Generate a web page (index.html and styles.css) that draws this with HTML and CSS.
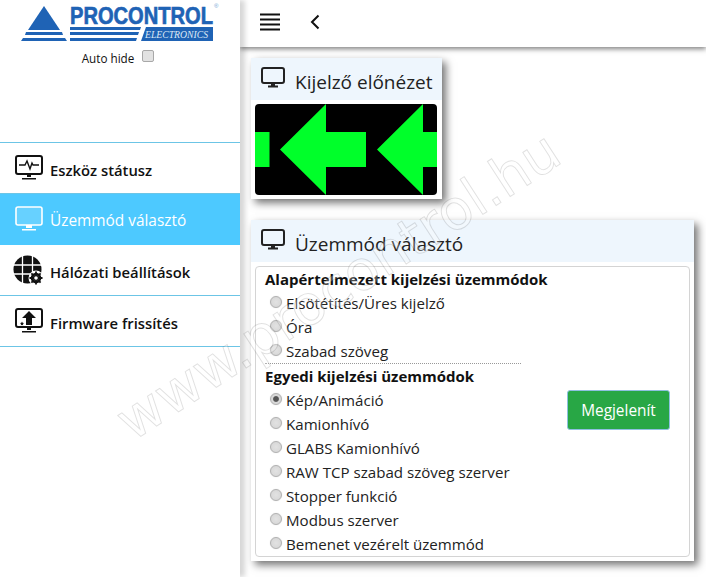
FILE: index.html
```html
<!DOCTYPE html>
<html>
<head>
    <meta charset="utf-8">
    <meta name="viewport" content="width=device-width, initial-scale=1">
    <title>Procontrol</title>
    <link rel="stylesheet" href="styles.css">
</head>
<body>
    <div class="page">
        <aside class="sidebar">
            <div class="logoBox">
                <svg class="logo" width="240" height="44" viewBox="0 0 240 44">
                    <polygon points="44,6 60,30 28,30" fill="#1f63b5"/>
                    <polygon points="26,32 62,32 63,35 25,35" fill="#1f63b5"/>
                    <polygon points="23,38 65,38 67,41 21,41" fill="#1f63b5"/>
                    <text class="logoName" x="70" y="24" textLength="143" lengthAdjust="spacingAndGlyphs">PROCONTROL</text>
                    <polygon points="70,27 141,27 140,30 70,30" fill="#1f63b5"/>
                    <polygon points="70,32 139,32 138,35 70,35" fill="#1f63b5"/>
                    <polygon points="70,38 137,38 136,41 70,41" fill="#1f63b5"/>
                    <polygon points="146,27 213,27 213,41 141,41" fill="#1f63b5"/>
                    <text class="logoSub" x="145" y="37.500" textLength="63" lengthAdjust="spacingAndGlyphs">ELECTRONICS</text>
                    <text class="logoReg" x="214" y="8">®</text>
                </svg>
            </div>
            <label class="autoHide">Auto hide <input type="checkbox" class="autoHideBox"></label>
            <nav class="menu">
                <a class="menuItem">
                    <svg class="menuIcon" width="28" height="26" viewBox="0 0 28 26">
                        <rect x="1" y="1" width="26" height="18" rx="2" fill="none" stroke="#111" stroke-width="2"/>
                        <path d="M4 10h6l2-4 3 8 2-6 1 2h6" fill="none" stroke="#111" stroke-width="1.400"/>
                        <path d="M12 19h4v3h-4zM7 23h14v1.500H7z" fill="#111"/>
                    </svg>
                    <span class="menuText">Eszköz státusz</span>
                </a>
                <a class="menuItem active">
                    <svg class="menuIcon" width="28" height="26" viewBox="0 0 28 26">
                        <rect x="1" y="1" width="26" height="18" rx="2" fill="#fff" fill-opacity="0.15" stroke="#fff" stroke-width="1.600"/>
                        <path d="M11 19h6v3h-6zM7 23h14v1.500H7z" fill="#fff"/>
                    </svg>
                    <span class="menuText">Üzemmód választó</span>
                </a>
                <a class="menuItem">
                    <svg class="menuIcon globeIcon" width="30" height="30" viewBox="0 0 30 30">
                        <circle cx="14.500" cy="14.500" r="14" fill="#111"/>
                        <path d="M0 10h29M0 19h29M9.500 0v29M19.500 0v29" stroke="#fff" stroke-width="1.300" fill="none"/>
                        <circle cx="23" cy="23" r="7.500" fill="#fff"/>
                        <circle cx="23" cy="23" r="4" fill="none" stroke="#111" stroke-width="2.600"/>
                        <path d="M23 16.500v13M16.500 23h13M18.400 18.400l9.200 9.200M27.600 18.400l-9.200 9.200" stroke="#111" stroke-width="1.800"/>
                        <circle cx="23" cy="23" r="1.800" fill="#fff"/>
                    </svg>
                    <span class="menuText">Hálózati beállítások</span>
                </a>
                <a class="menuItem">
                    <svg class="menuIcon" width="28" height="26" viewBox="0 0 28 26">
                        <rect x="1" y="1" width="26" height="18" rx="2" fill="none" stroke="#111" stroke-width="2"/>
                        <path d="M14 3l7 7h-4v7h-6v-7H7z" fill="#111"/>
                        <path d="M7 13.500l.6 1.300 1.400.2-1 1 .2 1.400-1.200-.7-1.200.7.200-1.400-1-1 1.400-.2z" fill="#111"/>
                        <path d="M12 19h4v3h-4zM7 23h14v1.500H7z" fill="#111"/>
                    </svg>
                    <span class="menuText">Firmware frissítés</span>
                </a>
            </nav>
        </aside>

        <main class="content">
            <header class="topBar">
                <svg class="hamburger" width="20" height="18" viewBox="0 0 20 18">
                    <path d="M0 1.500h20M0 6.500h20M0 11.500h20M0 16.500h20" stroke="#111" stroke-width="2"/>
                </svg>
                <svg class="backArrow" width="10" height="16" viewBox="0 0 10 16">
                    <path d="M8.500 1.500L2 8l6.500 6.500" fill="none" stroke="#111" stroke-width="2"/>
                </svg>
            </header>

            <section class="card previewCard">
                <div class="cardHeader">
                    <svg class="screenIcon" width="24" height="21" viewBox="0 0 24 21">
                        <rect x="1" y="1" width="22" height="15" rx="2" fill="none" stroke="#222" stroke-width="2"/>
                        <path d="M10 16h4v2.500h-4zM7 18.500h10V20.500H7z" fill="#222"/>
                    </svg>
                    <span class="cardTitle">Kijelző előnézet</span>
                </div>
                <svg class="preview" width="182" height="91" viewBox="0 0 182 91">
                    <rect width="182" height="91" rx="4" fill="#000"/>
                    <rect y="28" width="14.500" height="35" fill="#00ff2a"/>
                    <polygon points="25,45.500 71,0 71,28 111,28 111,63 71,63 71,91" fill="#00ff2a"/>
                    <polygon points="122,45.500 168,0 168,28 182,28 182,63 168,63 168,91" fill="#00ff2a"/>
                </svg>
            </section>

            <section class="card modeCard">
                <div class="cardHeader">
                    <svg class="screenIcon" width="24" height="21" viewBox="0 0 24 21">
                        <rect x="1" y="1" width="22" height="15" rx="2" fill="none" stroke="#222" stroke-width="2"/>
                        <path d="M10 16h4v2.500h-4zM7 18.500h10V20.500H7z" fill="#222"/>
                    </svg>
                    <span class="cardTitle">Üzemmód választó</span>
                </div>
                <div class="modeBox">
                    <form class="modeList">
                        <h4 class="groupTitle">Alapértelmezett kijelzési üzemmódok</h4>
                        <label class="modeRow"><input type="radio" name="mode" class="modeRadio"> Elsötétítés/Üres kijelző</label>
                        <label class="modeRow"><input type="radio" name="mode" class="modeRadio"> Óra</label>
                        <label class="modeRow"><input type="radio" name="mode" class="modeRadio"> Szabad szöveg</label>
                        <hr class="groupRule">
                        <h4 class="groupTitle">Egyedi kijelzési üzemmódok</h4>
                        <label class="modeRow"><input type="radio" name="mode" class="modeRadio" checked> Kép/Animáció</label>
                        <label class="modeRow"><input type="radio" name="mode" class="modeRadio"> Kamionhívó</label>
                        <label class="modeRow"><input type="radio" name="mode" class="modeRadio"> GLABS Kamionhívó</label>
                        <label class="modeRow"><input type="radio" name="mode" class="modeRadio"> RAW TCP szabad szöveg szerver</label>
                        <label class="modeRow"><input type="radio" name="mode" class="modeRadio"> Stopper funkció</label>
                        <label class="modeRow"><input type="radio" name="mode" class="modeRadio"> Modbus szerver</label>
                        <label class="modeRow"><input type="radio" name="mode" class="modeRadio"> Bemenet vezérelt üzemmód</label>
                    </form>
                    <button class="showButton">Megjelenít</button>
                </div>
            </section>
        </main>

        <div class="watermark">www.procontrol.hu</div>
    </div>
</body>
</html>
```

FILE: styles.css
```css
* {
    box-sizing: border-box;
}

html, body {
    height: 100%;
    margin: 0;
}

body {
    background-color: #fff;
    color: #111;
    font-family: "Open Sans", "Noto Sans", sans-serif;
    font-size: 15px;
    overflow: hidden;
}

.page {
    display: flex;
    height: 577px;
    overflow: hidden;
    position: relative;
}

.sidebar {
    width: 240px;
    flex: none;
    background-color: #fff;
    box-shadow: 5px 0 5px rgba(0, 0, 0, 0.16);
    position: relative;
    z-index: 2;
}

.logoBox {
    height: 44px;
}

.logo {
    display: block;
}

.logoName {
    font-family: "Liberation Sans", sans-serif;
    font-weight: bold;
    font-size: 24px;
    fill: #1f63b5;
    stroke: #1f63b5;
    stroke-width: 0.7px;
}

.logoSub {
    font-family: "Liberation Serif", serif;
    font-style: italic;
    font-size: 9.5px;
    fill: #dce8f6;
}

.logoReg {
    font-family: "Liberation Sans", sans-serif;
    font-size: 6px;
    fill: #6f9fd4;
}

.autoHide {
    display: flex;
    justify-content: center;
    align-items: flex-start;
    gap: 8px;
    margin-left: -4px;
    height: 98px;
    padding-top: 6px;
    font-size: 11.7px;
    line-height: 17px;
}

.autoHideBox {
    appearance: none;
    width: 12px;
    height: 12px;
    margin: 0;
    background-color: #e2e2e2;
    border: 1px solid #a8a8a8;
    border-radius: 2px;
}

.menu {
    border-top: 1px solid #6cc5e6;
}

.menuItem {
    display: flex;
    align-items: center;
    height: 51px;
    padding-left: 15px;
    border-bottom: 1px solid #6cc5e6;
    color: #111;
    font-size: 14.8px;
    font-weight: 600;
}

.menuItem.active {
    background-color: #4dc9ff;
    color: #fff;
    border-bottom-color: #4dc9ff;
    font-size: 15.4px;
    font-weight: 400;
}

.menuIcon {
    flex: none;
    margin-right: 7px;
}

.globeIcon {
    margin-left: -2px;
}

.menuText {
    padding-top: 3px;
}

.content {
    flex: 1;
    background-color: #fff;
    min-width: 0;
}

.topBar {
    display: flex;
    align-items: center;
    gap: 30px;
    height: 47px;
    padding-left: 20px;
    padding-bottom: 3px;
    background-color: #fff;
    box-shadow: 0 2px 5px rgba(0, 0, 0, 0.5);
}

.card {
    margin-left: 11px;
    padding: 0 4px 4px;
    background-color: #fff;
    box-shadow: 4px 4px 8px rgba(0, 0, 0, 0.55);
}

.previewCard {
    width: 191px;
    margin-top: 11px;
}

.modeCard {
    width: 443px;
    margin-top: 21px;
}

.cardHeader {
    display: flex;
    align-items: center;
    gap: 10px;
    height: 42px;
    margin: 0 -4px;
    padding-left: 10px;
    background-color: #eef6fd;
    font-size: 19px;
    color: #222;
}

.cardTitle {
    padding-top: 5px;
}

.screenIcon {
    flex: none;
    margin-top: -4px;
}

.preview {
    display: block;
    margin-top: 4px;
}

.modeBox {
    display: flex;
    align-items: flex-start;
    height: 291px;
    margin-top: 4px;
    padding-left: 9px;
    border: 1px solid #d4d4d4;
    border-radius: 4px;
}

.modeList {
    width: 302px;
}

.groupTitle {
    margin: 0;
    font-size: 15px;
    font-weight: 700;
    line-height: 24px;
}

.modeRow {
    display: flex;
    align-items: center;
    gap: 4px;
    height: 24px;
    padding-left: 5px;
    font-size: 15.1px;
    color: #222;
}

.modeRadio {
    appearance: none;
    flex: none;
    width: 12px;
    height: 12px;
    margin: -3px 0 0;
    border: 1px solid #b0b0b0;
    border-radius: 50%;
    background: radial-gradient(circle, #e2e2e2 0, #d4d4d4 100%);
    box-shadow: 0 0 1px #ccc;
}

.modeRadio:checked {
    background: radial-gradient(circle, #555 0, #555 2.4px, #d8d8d8 3.4px);
}

.groupRule {
    width: 256px;
    height: 0;
    margin: 0;
    border: 0;
    border-top: 1px dotted #999;
}

.showButton {
    width: 103px;
    height: 40px;
    margin-top: 123px;
    padding: 0;
    background-color: #28a745;
    color: #fff;
    border: 1px solid #8fc0e0;
    border-radius: 3px;
    font-family: inherit;
    font-size: 15.4px;
}

.watermark {
    position: absolute;
    left: 122px;
    top: 394px;
    z-index: 3;
    transform: rotate(-33deg);
    transform-origin: left center;
    font-family: "DejaVu Sans", sans-serif;
    font-size: 55px;
    color: rgba(255, 255, 255, 0.25);
    -webkit-text-stroke: 1px rgba(0, 0, 0, 0.12);
    white-space: nowrap;
    pointer-events: none;
}
```
